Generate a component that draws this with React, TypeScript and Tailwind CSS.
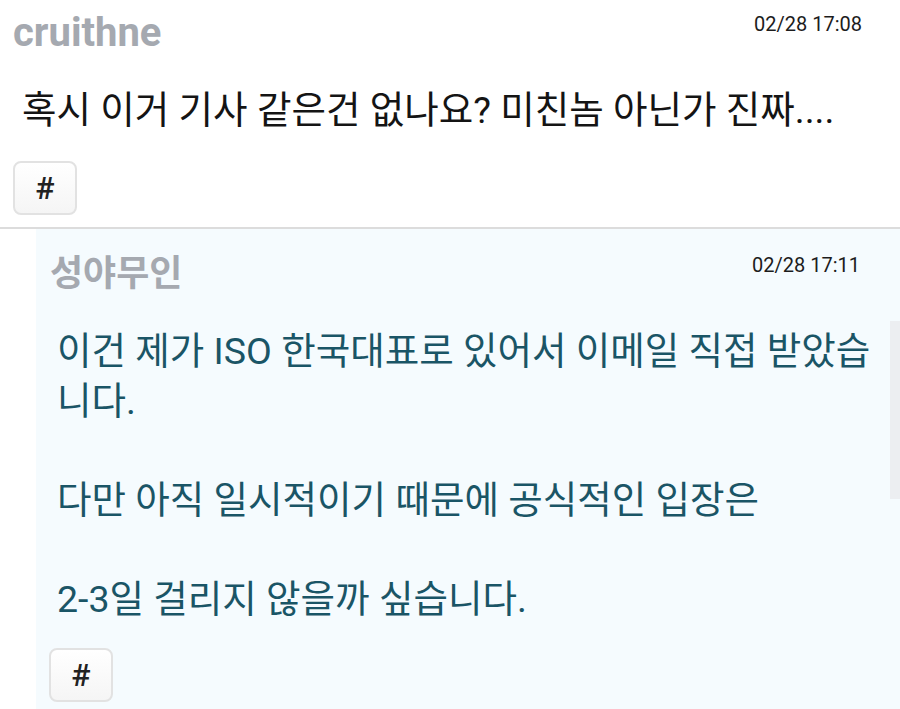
import React from 'react';

const font = "font-['Roboto','Noto_Sans_CJK_KR',sans-serif]";

const HashButton: React.FC = () => (
    <button className="w-[64px] h-[54px] rounded-[8px] border-2 border-[#e2e2e2] bg-gradient-to-b from-white to-[#f5f5f5] text-[32px] font-medium text-[#222] flex items-center justify-center">
        #
    </button>
);

const App: React.FC = () => {
    return (
        <div className={`${font} w-[900px] h-[709px] bg-white overflow-hidden`}>
            {/* original post */}
            <div className="px-[13px] pt-[12px]">
                <div className="flex justify-between items-start">
                    <span className="text-[40px] leading-[42px] font-bold text-[#a5a9b0]">cruithne</span>
                    <span className="text-[20px] leading-[20px] text-[#1c1c1c] mr-[25px] mt-[2px]">02/28 17:08</span>
                </div>
                <p className="mt-[35px] ml-[9px] text-[37.5px] leading-[42px] text-[#141414] whitespace-nowrap">
                    혹시 이거 기사 같은건 없나요? 미친놈 아닌가 진짜....
                </p>
                <div className="mt-[30px] pb-[12px]">
                    <HashButton />
                </div>
            </div>
            <div className="h-[2px] bg-[#dcdcdc]" />

            {/* reply */}
            <div className="pl-[36px]">
                <div className="relative bg-[#f5fbfe] pl-[13px] pt-[24px] pb-[20px]">
                    <div className="flex justify-between items-start">
                        <span className="ml-[1px] text-[36px] leading-[42px] font-bold text-[#a5a9b0]">성야무인</span>
                        <span className="text-[20px] leading-[20px] text-[#1c1c1c] mr-[40px] mt-[2px]">02/28 17:11</span>
                    </div>
                    <div className="mt-[32px] ml-[8px] pr-[10px] text-[37.5px] leading-[49.6px] text-[#1a5566]">
                        <p>이건 제가 ISO 한국대표로 있어서 이메일 직접 받았습니다.</p>
                        <p>&nbsp;</p>
                        <p>다만 아직 일시적이기 때문에 공식적인 입장은</p>
                        <p>&nbsp;</p>
                        <p>2-3일 걸리지 않을까 싶습니다.</p>
                    </div>
                    <div className="mt-[23px]">
                        <HashButton />
                    </div>
                    <div className="absolute right-0 top-[92px] w-[10px] h-[178px] bg-[#eceef1]" />
                </div>
            </div>
        </div>
    );
};

export default App;
